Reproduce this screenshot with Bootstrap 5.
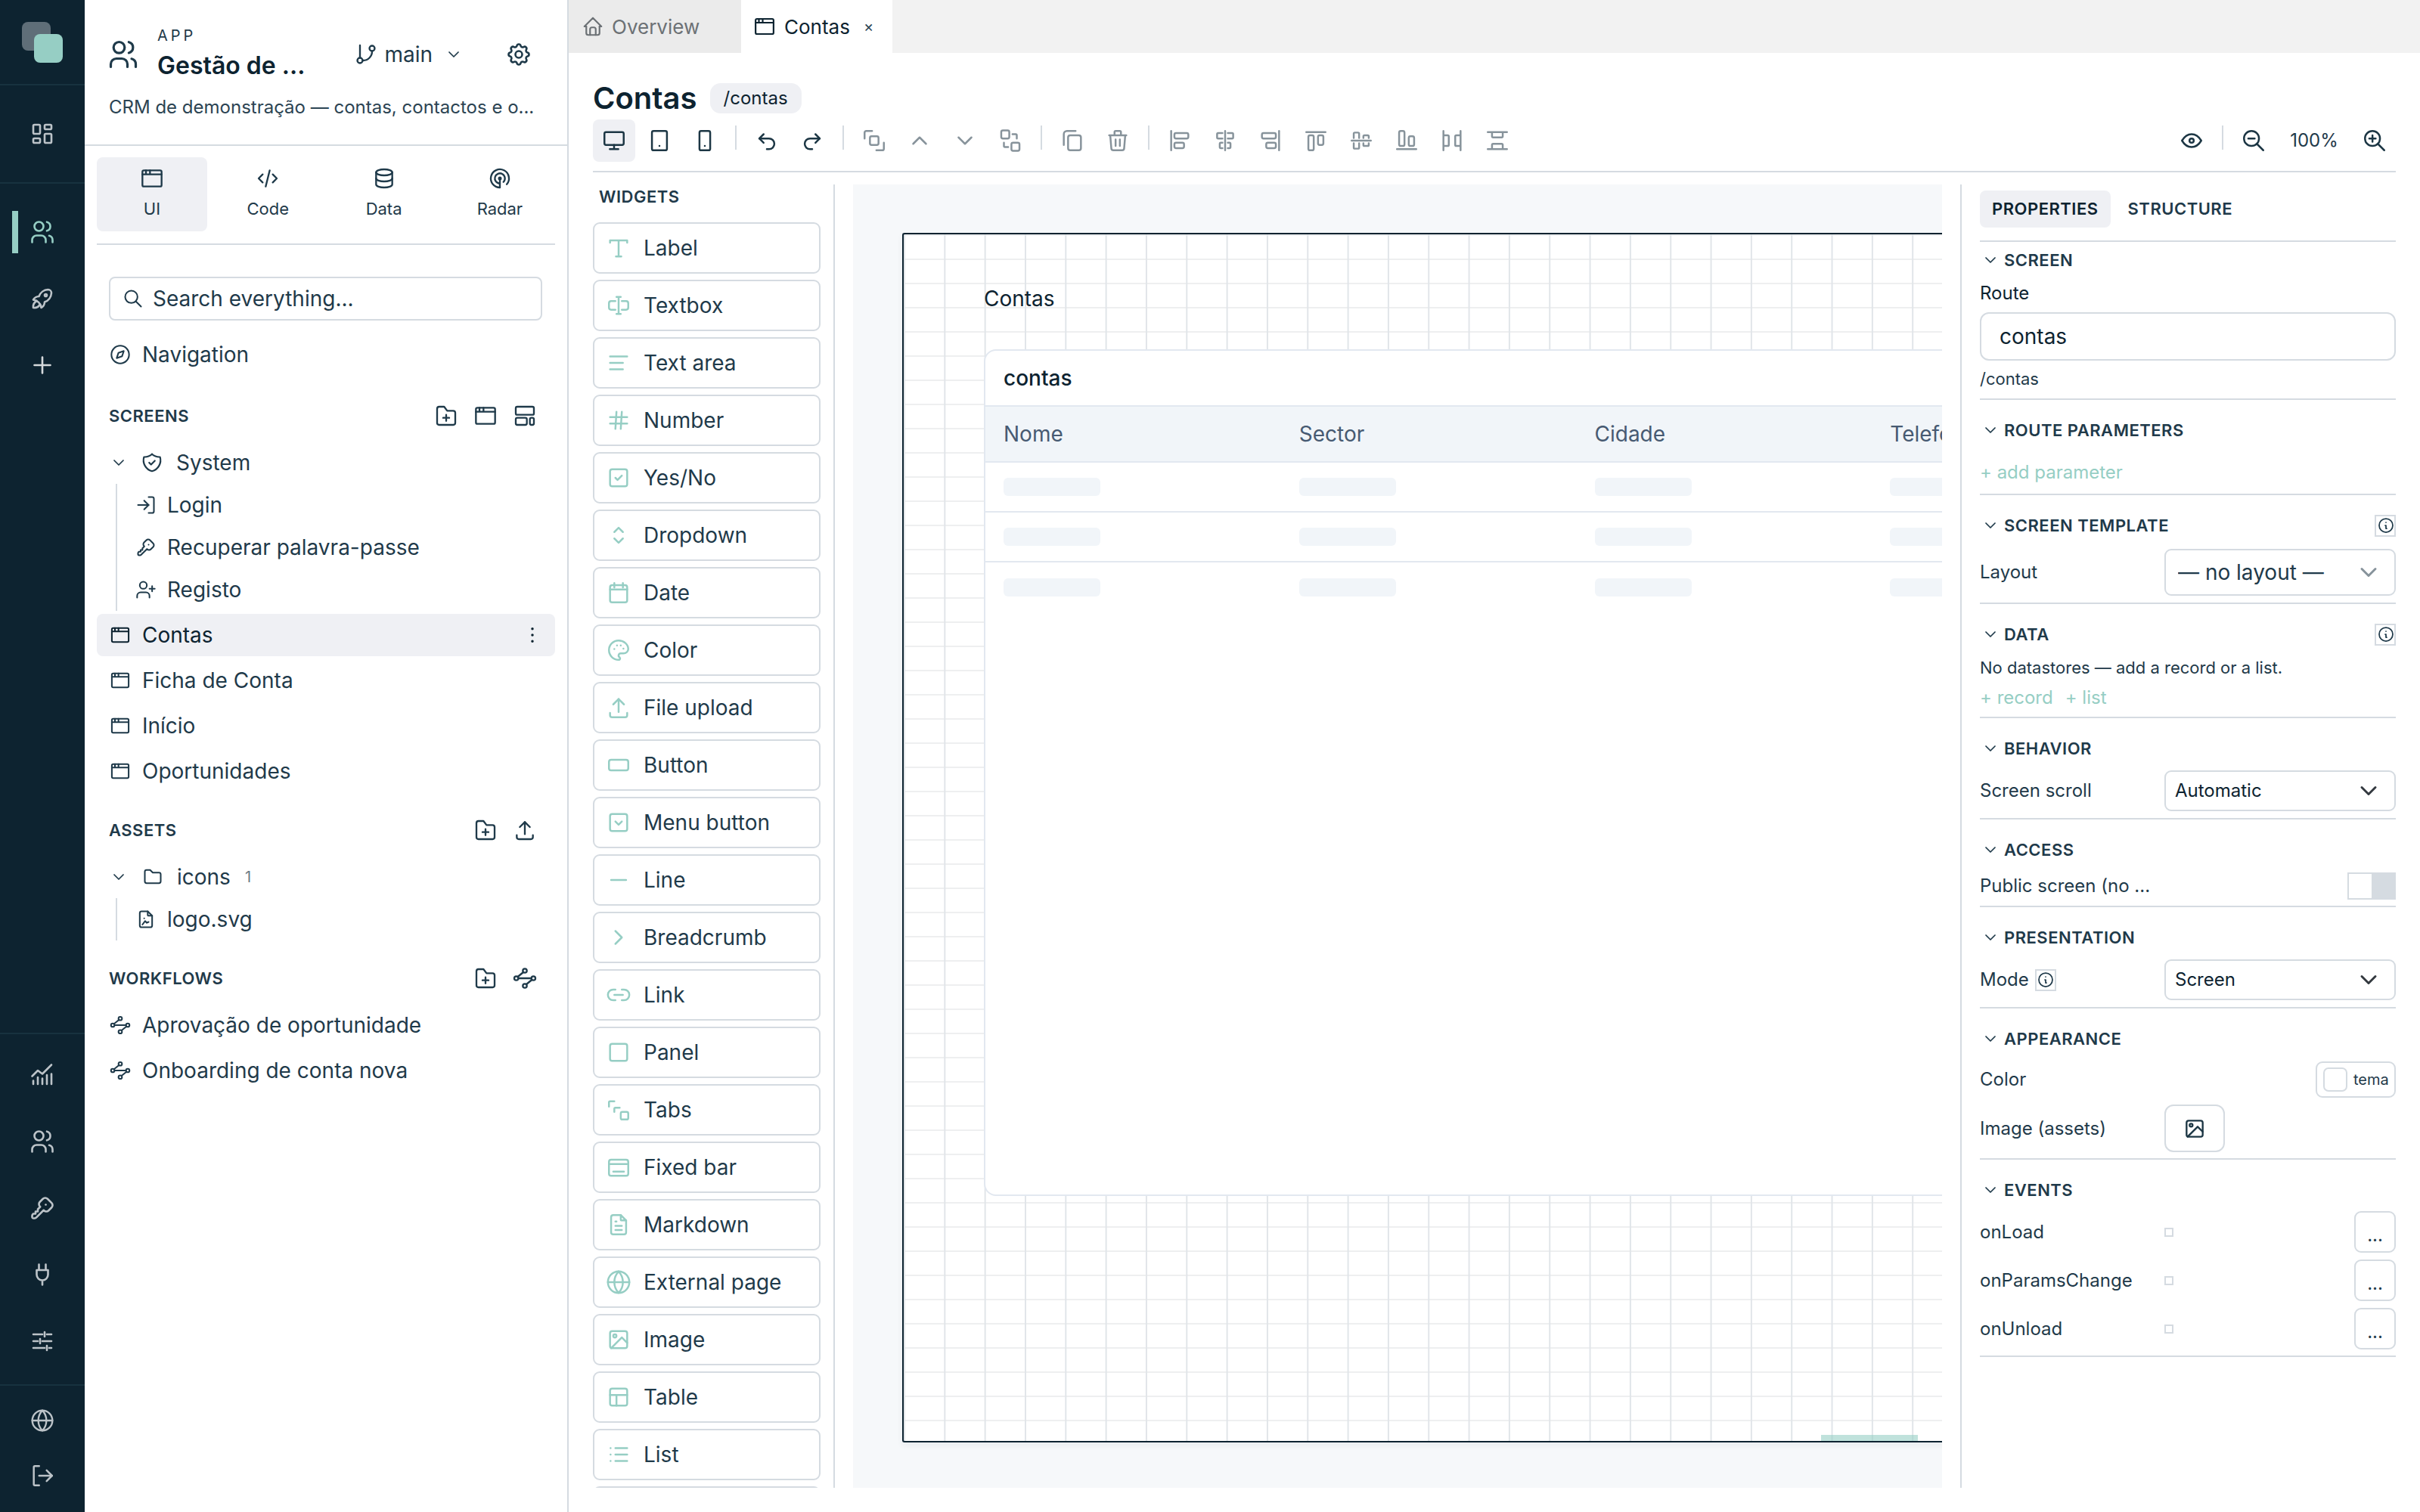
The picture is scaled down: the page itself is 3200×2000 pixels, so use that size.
<!DOCTYPE html>
<html lang="pt">
<head>
  <meta charset="UTF-8">
  <meta name="viewport" content="width=device-width, initial-scale=1">
  <title>Contas</title>
  <link href="https://cdn.jsdelivr.net/npm/bootstrap@5.3.2/dist/css/bootstrap.min.css" rel="stylesheet">
  <style>
    :root { --ink: #0d2330; --txt: #1f3a4a; --line: #d5dbe1; --teal: #96cec4; --pill: #eff0f4; --dim: #87939b; }
    html, body { height: 2000px; }
    body { font-family: Inter, "Liberation Sans", sans-serif; font-size: 28px; color: var(--txt); background: #fff; overflow: hidden; }

    .ic { fill: none; stroke: currentColor; stroke-width: 1.75; stroke-linecap: round; stroke-linejoin: round; flex: none; }
    .s24 { width: 24px; height: 24px; }
    .s28 { width: 28px; height: 28px; }
    .s30 { width: 30px; height: 30px; }
    .s32 { width: 32px; height: 32px; }
    .s34 { width: 34px; height: 34px; }
    .s36 { width: 36px; height: 36px; }
    .s44 { width: 44px; height: 44px; }

    /* rail */
    .rail { width: 112px; background: #0d2330; color: #bcc3c8; flex: none; }
    .rail-logo { height: 113px; position: relative; border-bottom: 2px solid #17323f; }
    .logo-back, .logo-front { position: absolute; width: 38px; height: 38px; border-radius: 8px; }
    .logo-back { left: 29px; top: 29px; background: #5f6e78; }
    .logo-front { left: 45px; top: 45px; background: var(--teal); }
    .rail-group { border-bottom: 2px solid #17323f; }
    .rail-item { height: 88px; display: flex; align-items: center; justify-content: center; position: relative; }
    .rail-item.on { color: var(--teal); }
    .rail-item.on::before { content: ""; position: absolute; left: 16px; top: 16px; width: 8px; height: 56px; background: var(--teal); }
    .rail-plus { color: #d5d9dc; }
    .rail-lower { border-top: 2px solid #17323f; padding: 10px 0 13px; }
    .rail-foot { border-top: 2px solid #17323f; height: 169px; padding-top: 2px; }

    /* sidebar */
    .side { width: 640px; flex: none; border-right: 2px solid var(--line); }
    .side-head { height: 193px; padding: 34px 0 0 32px; border-bottom: 2px solid var(--line); }
    .app-row { height: 76px; }
    .app-icon { margin: 0 23px 0 -3px; }
    .app-kicker { font-size: 20px; line-height: 24px; letter-spacing: 4px; color: var(--txt); margin-top: -2px; }
    .app-name { font-size: 32px; line-height: 42px; font-weight: 600; color: var(--ink); margin-top: 7px; }
    .branch { font-size: 28px; color: var(--txt); }
    .app-gear { margin: 0 46px 0 56px; }
    .app-desc { font-size: 24px; line-height: 32px; margin-top: 16px; color: #2c4453; white-space: nowrap; }
    .side-tabs { margin: 15px 16px 0; padding-bottom: 16px; border-bottom: 2px solid var(--line); display: grid; grid-template-columns: repeat(4, 146px); column-gap: 7.3px; }
    .side-tab { height: 98px; border-radius: 8px; font-size: 22px; color: var(--txt); display: flex; flex-direction: column; align-items: center; padding-top: 12px; gap: 10px; line-height: 28px; }
    .side-tab.on { background: var(--pill); }
    .side-search { margin: 42px 33px 0 32px; height: 58px; border: 2px solid var(--line); border-radius: 8px; padding: 0 16px; gap: 12px; font-size: 28px; }
    .tree { margin: 0 16px; }
    .tree-row { height: 56px; display: flex; align-items: center; gap: 15px; padding-left: 17px; border-radius: 8px; color: var(--txt); margin-top: 4px; }
    .tree-row.on { background: var(--pill); color: var(--ink); }
    .tree-folder { padding-left: 20px; gap: 24px; margin-top: 0; }
    .tree-kids { margin-left: 25px; border-left: 2px solid var(--line); padding-left: 24px; }
    .tree-kids .tree-row { margin-top: 0; padding-left: 0; gap: 14px; }
    .tree-head { height: 32px; margin-left: 16px; padding-right: 24px; display: flex; align-items: center; justify-content: space-between; font-size: 22px; font-weight: 600; letter-spacing: .5px; }
    .head-icons { display: flex; gap: 20px; }
    .count { font-size: 20px; color: #6c7a84; margin-left: -5px; }

    /* main */
    .main { min-width: 0; }
    .file-tabs { height: 70px; background: #f2f2f2; }
    .file-tab { height: 70px; display: flex; align-items: center; font-size: 26px; }
    .file-tab.off { width: 228px; background: #ebebeb; color: #6c7175; padding-left: 17px; gap: 10px; }
    .file-tab.cur { width: 200px; background: #fff; color: var(--ink); padding-left: 16px; gap: 11px; }
    .tab-x { font-size: 20px; margin-left: 7px; color: #2c4453; }
    .work { padding: 0 32px; }
    .page-title { margin-top: 40px; height: 40px; gap: 17px; }
    .page-name { font-size: 40px; font-weight: 600; color: var(--ink); line-height: 40px; }
    .route-chip { height: 40px; padding: 0 18px; border-radius: 14px; background: var(--pill); font-size: 24px; color: var(--ink); display: flex; align-items: center; }
    .tools { margin-top: 8px; padding-bottom: 12px; border-bottom: 2px solid var(--line); gap: 4px; box-sizing: content-box; height: 56px; }
    .tool { width: 56px; height: 56px; padding: 0; border: 0; border-radius: 8px; color: #1c3644; display: flex; align-items: center; justify-content: center; }
    .tool.on { background: var(--pill); }
    .tool.dim { color: var(--dim); }
    .tool-sep { width: 2px; height: 32px; background: var(--line); margin: 0 8px; }
    .zoom-val { width: 96px; text-align: center; font-size: 24px; color: var(--txt); }
    .work-body { margin-top: 16px; height: 1724px; }

    /* widgets */
    .widgets { width: 320px; flex: none; border-right: 2px solid var(--line); padding-right: 17px; overflow: hidden; }
    .widgets-title { font-size: 22px; font-weight: 600; line-height: 32px; letter-spacing: .5px; margin-bottom: 18px; padding-left: 8px; }
    .widget { height: 68px; margin-bottom: 8px; border: 2px solid var(--line); border-radius: 9px; display: flex; align-items: center; padding-left: 15px; gap: 16px; background: #fff; }
    .widget .ic { color: var(--teal); }

    /* canvas */
    .stage { width: 1440px; margin-left: 24px; flex: none; background: #f6f8fa; overflow: hidden; padding: 64px 0 0 65px; }
    .frame { position: relative; width: 2400px; height: 1600px; background-color: #fff; border: 2px solid var(--ink); border-right: 0; border-radius: 3px 0 0 3px; box-shadow: 0 4px 8px rgba(13,35,48,.06);
      background-image: linear-gradient(to right, #e1e5e9 2px, transparent 2px), linear-gradient(to bottom, #eeeff0 2px, transparent 2px);
      background-size: 53.33px 32px; background-position: 0 0; }
    .frame-label { position: absolute; left: 106px; top: 67px; line-height: 36px; color: var(--ink); }
    .frame-card { position: absolute; left: 106px; top: 152px; width: 1700px; height: 1120px; border: 2px solid #e2e8f0; border-radius: 16px; overflow: hidden; background: #fff; }
    .frame-card-title { height: 72px; display: flex; align-items: center; padding-left: 24px; font-weight: 500; color: var(--ink); }
    .frame-table { width: 1563px; table-layout: fixed; margin: 0; }
    .frame-table th, .frame-table td { padding: 0 0 0 24px; vertical-align: middle; border-bottom: 2px solid #e2e8f0; }
    .frame-table th { height: 74px; background: #f1f5f9; font-weight: 400; color: #475a72; border-top: 2px solid #e2e8f0; }
    .frame-table td { height: 66px; }
    .frame-table tr:last-child td { border-bottom: 0; }
    .skel { display: block; width: 128px; height: 24px; border-radius: 6px; background: #f1f5f9; }
    .frame-mark { position: absolute; left: 1213px; bottom: 0; width: 128px; height: 8px; background: rgba(150,206,196,.6); }

    /* properties */
    .props { margin-left: 24px; padding-left: 24px; border-left: 2px solid var(--line); font-size: 24px; min-width: 0; }
    .props-tabs { padding: 8px 0 17px; border-bottom: 2px solid var(--line); gap: 7px; }
    .props-tab { height: 49px; padding: 0 16px; border-radius: 8px; font-size: 22px; font-weight: 600; letter-spacing: .5px; display: flex; align-items: center; color: var(--txt); }
    .props-tab.on { background: var(--pill); color: var(--ink); }
    .sec { padding: 24px 0 9px; border-bottom: 2px solid var(--line); }
    .sec-first { padding-top: 8px; }
    .sec-head { height: 32px; margin-bottom: 13px; display: flex; align-items: center; font-size: 22px; font-weight: 600; letter-spacing: .5px; gap: 6px; }
    .sec-head .ic { margin-left: 2px; }
    .hint-box { width: 28px; height: 29px; border: 2px solid var(--line); display: inline-flex; align-items: center; justify-content: center; }
    .prop-row { display: flex; align-items: center; }
    .prop-label { width: 244px; flex: none; }
    .route-label { color: var(--ink); line-height: 30px; margin-bottom: 10px; }
    .route-input { height: 64px; border: 2px solid var(--line); border-radius: 12px; font-size: 28px; padding: 0 24px; color: var(--ink); }
    .route-sub { font-size: 22px; line-height: 30px; margin: 9px 0 2px; }
    .add-link { color: var(--teal); line-height: 32px; }
    .note { font-size: 22px; line-height: 28px; margin-bottom: 10px; }
    .prop-select { height: 54px; flex: 1; border: 2px solid var(--line); border-radius: 9px; font-size: 24px; padding: 0 40px 0 12px; color: var(--ink); background-position: right 22px center; background-size: 24px; }
    .prop-select.tall { height: 62px; font-size: 28px; padding-left: 16px; color: var(--txt); background-image: url("data:image/svg+xml,%3csvg xmlns='http://www.w3.org/2000/svg' viewBox='0 0 16 16'%3e%3cpath fill='none' stroke='%2387939b' stroke-linecap='round' stroke-linejoin='round' stroke-width='2' d='m2 5 6 6 6-6'/%3e%3c/svg%3e"); }
    .pub-toggle { width: 64px; height: 36px; border: 2px solid var(--line); display: flex; justify-content: flex-end; }
    .pub-toggle span { width: 30px; background: var(--line); }
    .tema-btn { width: 106px; height: 48px; border: 2px solid var(--line); border-radius: 9px; display: flex; align-items: center; padding-left: 8px; gap: 8px; font-size: 20px; }
    .tema-swatch { width: 32px; height: 32px; border: 2px solid var(--line); border-radius: 7px; }
    .asset-btn { width: 80px; height: 63px; border: 2px solid var(--line); border-radius: 12px; padding: 0; display: flex; align-items: center; justify-content: center; color: #1c3644; }
    .ev-row { margin-bottom: 9px; }
    .ev-row:last-child { margin-bottom: 0; }
    .ev-check { width: 12px; height: 12px; border: 2px solid var(--line); }
    .ev-btn { width: 55px; height: 55px; margin-left: auto; padding: 8px 0 0; border: 2px solid var(--line); border-radius: 9px; font-size: 24px; color: var(--txt); line-height: 1; }
  </style>
</head>
<body>

<svg width="0" height="0" class="position-absolute">
  <symbol id="users" viewBox="0 0 24 24"><circle cx="9" cy="7" r="4"/><path d="M3 21v-2a4 4 0 0 1 4-4h4a4 4 0 0 1 4 4v2"/><path d="M16 3.13a4 4 0 0 1 0 7.75"/><path d="M21 21v-2a4 4 0 0 0-3-3.85"/></symbol>
  <symbol id="dash" viewBox="0 0 24 24"><rect x="4" y="4" width="6" height="8" rx="1"/><rect x="4" y="16" width="6" height="4" rx="1"/><rect x="14" y="12" width="6" height="8" rx="1"/><rect x="14" y="4" width="6" height="4" rx="1"/></symbol>
  <symbol id="rocket" viewBox="0 0 24 24"><path d="M4 13a8 8 0 0 1 7 7a6 6 0 0 0 3-5a9 9 0 0 0 6-8a3 3 0 0 0-3-3a9 9 0 0 0-8 6a6 6 0 0 0-5 3"/><path d="M7 14a6 6 0 0 0-3 6a6 6 0 0 0 6-3"/><circle cx="15" cy="9" r="1"/></symbol>
  <symbol id="plus" viewBox="0 0 24 24"><path d="M12 5v14M5 12h14"/></symbol>
  <symbol id="chart" viewBox="0 0 24 24"><path d="M4 20v-3M8 20v-6M12 20v-5M16 20v-8M20 20v-9"/><path d="M3 13l5-5 4 3 8-8"/></symbol>
  <symbol id="key" viewBox="0 0 24 24"><path d="M16.555 3.843l3.602 3.602a2.877 2.877 0 0 1 0 4.069l-2.643 2.643a2.877 2.877 0 0 1-4.069 0l-.301-.301l-6.558 6.558a2 2 0 0 1-1.239 .578l-.175 .008h-1.172a1 1 0 0 1-.993-.883l-.007-.117v-1.172a2 2 0 0 1 .467-1.284l.119-.13l.414-.414h2v-2h2v-2l2.144-2.144l-.301-.301a2.877 2.877 0 0 1 0-4.069l2.643-2.643a2.877 2.877 0 0 1 4.069 0z"/><path d="M15 9h.01"/></symbol>
  <symbol id="plug" viewBox="0 0 24 24"><path d="M9 3v5M15 3v5M7 8h10v4a5 5 0 0 1-10 0zM12 17v4"/></symbol>
  <symbol id="sliders" viewBox="0 0 24 24"><path d="M4 6h8M16 6h4M14 4v4M4 12h4M12 12h8M10 10v4M4 18h10M18 18h2M16 16v4"/></symbol>
  <symbol id="globe" viewBox="0 0 24 24"><circle cx="12" cy="12" r="10"/><path d="M12 2a14.5 14.5 0 0 0 0 20a14.5 14.5 0 0 0 0-20"/><path d="M2 12h20"/></symbol>
  <symbol id="logout" viewBox="0 0 24 24"><path d="M9 21H5a1 1 0 0 1-1-1V4a1 1 0 0 1 1-1h4"/><path d="M16 17l5-5-5-5"/><path d="M21 12H9"/></symbol>
  <symbol id="branch" viewBox="0 0 24 24"><path d="M6 3v12"/><circle cx="18" cy="6" r="2.6"/><circle cx="6" cy="18" r="2.6"/><path d="M18 9a9 9 0 0 1-9 9"/></symbol>
  <symbol id="down" viewBox="0 0 24 24"><path d="M6 9l6 6l6-6"/></symbol>
  <symbol id="up" viewBox="0 0 24 24"><path d="M6 15l6-6l6 6"/></symbol>
  <symbol id="gear" viewBox="0 0 24 24"><path d="M10.325 4.317c.426-1.756 2.924-1.756 3.35 0a1.724 1.724 0 0 0 2.573 1.066c1.543-.94 3.31 .826 2.37 2.37a1.724 1.724 0 0 0 1.065 2.572c1.756 .426 1.756 2.924 0 3.35a1.724 1.724 0 0 0-1.066 2.573c.94 1.543-.826 3.31-2.37 2.37a1.724 1.724 0 0 0-2.572 1.065c-.426 1.756-2.924 1.756-3.35 0a1.724 1.724 0 0 0-2.573-1.066c-1.543 .94-3.31-.826-2.37-2.37a1.724 1.724 0 0 0-1.065-2.572c-1.756-.426-1.756-2.924 0-3.35a1.724 1.724 0 0 0 1.066-2.573c-.94-1.543 .826-3.31 2.37-2.37c1 .608 2.296 .07 2.572-1.065z"/><circle cx="12" cy="12" r="3"/></symbol>
  <symbol id="win" viewBox="0 0 24 24"><rect x="2.5" y="4" width="19" height="16" rx="1.5"/><path d="M2.5 8h19M6 4v4M10 4v4"/></symbol>
  <symbol id="code" viewBox="0 0 24 24"><path d="M7 8l-4 4l4 4M17 8l4 4l-4 4M14 4l-4 16"/></symbol>
  <symbol id="db" viewBox="0 0 24 24"><ellipse cx="12" cy="6" rx="8" ry="3"/><path d="M4 6v6a8 3 0 0 0 16 0v-6"/><path d="M4 12v6a8 3 0 0 0 16 0v-6"/></symbol>
  <symbol id="radar" viewBox="0 0 24 24"><circle cx="12" cy="12" r="1"/><path d="M15.51 15.56a5 5 0 1 0-3.51 1.44"/><path d="M18.832 17.86a9 9 0 1 0-6.832 3.14"/><path d="M12 12v9"/></symbol>
  <symbol id="search" viewBox="0 0 24 24"><circle cx="10" cy="10" r="7"/><path d="M21 21l-6-6"/></symbol>
  <symbol id="compass" viewBox="0 0 24 24"><circle cx="12" cy="12" r="10"/><path d="M8 16l2-6 6-2-2 6z"/></symbol>
  <symbol id="folderplus" viewBox="0 0 24 24"><path d="M5 3h5l3 4h6a2 2 0 0 1 2 2v10a2 2 0 0 1-2 2H5a2 2 0 0 1-2-2V5a2 2 0 0 1 2-2"/><path d="M12 11v6M9 14h6"/></symbol>
  <symbol id="folder" viewBox="0 0 24 24"><path d="M5 4h4l3 3h7a2 2 0 0 1 2 2v8a2 2 0 0 1-2 2H5a2 2 0 0 1-2-2V6a2 2 0 0 1 2-2"/></symbol>
  <symbol id="layout" viewBox="0 0 24 24"><rect x="3" y="3" width="18" height="8" rx="1.5"/><rect x="3" y="14" width="11" height="7" rx="1.5"/><rect x="17" y="14" width="4" height="7" rx="1.5"/></symbol>
  <symbol id="shield" viewBox="0 0 24 24"><path d="M12 3a12 12 0 0 0 8.5 3a12 12 0 0 1-8.5 15a12 12 0 0 1-8.5-15a12 12 0 0 0 8.5-3"/><path d="M9 12l2 2l4-4"/></symbol>
  <symbol id="login" viewBox="0 0 24 24"><path d="M15 3h4a2 2 0 0 1 2 2v14a2 2 0 0 1-2 2h-4"/><path d="M10 17l5-5-5-5"/><path d="M15 12H3"/></symbol>
  <symbol id="userplus" viewBox="0 0 24 24"><path d="M16 21v-2a4 4 0 0 0-4-4H6a4 4 0 0 0-4 4v2"/><circle cx="9" cy="7" r="4"/><path d="M19 8v6M22 11h-6"/></symbol>
  <symbol id="dots" viewBox="0 0 24 24"><path d="M12 5v.01M12 12v.01M12 19v.01" stroke-width="3"/></symbol>
  <symbol id="upload" viewBox="0 0 24 24"><path d="M4 17v2a2 2 0 0 0 2 2h12a2 2 0 0 0 2-2v-2"/><path d="M7 9l5-5l5 5"/><path d="M12 4v12"/></symbol>
  <symbol id="fileimg" viewBox="0 0 24 24"><path d="M14 3v4a1 1 0 0 0 1 1h4"/><path d="M17 21H7a2 2 0 0 1-2-2V5a2 2 0 0 1 2-2h7l5 5v11a2 2 0 0 1-2 2z"/><path d="M8 18l3-4l2 2l2-1M10 11h.01"/></symbol>
  <symbol id="flow" viewBox="0 0 24 24"><circle cx="12" cy="4.5" r="2"/><circle cx="12" cy="19.5" r="2"/><circle cx="3.5" cy="12" r="2"/><circle cx="20.5" cy="12" r="2"/><path d="M5.5 12h13M10.5 6L5 10.5M19 13.5L13.5 18"/></symbol>
  <symbol id="home" viewBox="0 0 24 24"><path d="M5 12H3l9-9l9 9h-2"/><path d="M5 12v7a2 2 0 0 0 2 2h10a2 2 0 0 0 2-2v-7"/><path d="M9 21v-6a2 2 0 0 1 2-2h2a2 2 0 0 1 2 2v6"/></symbol>
  <symbol id="monitor" viewBox="0 0 24 24"><rect x="3" y="4" width="18" height="12" rx="1.5"/><path d="M12 16v4M8 20h8"/></symbol>
  <symbol id="tablet" viewBox="0 0 24 24"><rect x="5" y="3" width="14" height="18" rx="1.5"/><path d="M12 17v.01"/></symbol>
  <symbol id="phone" viewBox="0 0 24 24"><rect x="7" y="3" width="10" height="18" rx="1.5"/><path d="M12 17v.01"/></symbol>
  <symbol id="undo" viewBox="0 0 24 24"><path d="M9 14l-4-4l4-4"/><path d="M5 10h9a5 5 0 0 1 0 10h-2"/></symbol>
  <symbol id="redo" viewBox="0 0 24 24"><path d="M15 14l4-4l-4-4"/><path d="M19 10h-9a5 5 0 0 0 0 10h2"/></symbol>
  <symbol id="front" viewBox="0 0 24 24"><path d="M3 10V4.5A1.5 1.5 0 0 1 4.5 3H10M21 14v5.5a1.5 1.5 0 0 1-1.5 1.5H14"/><rect x="8" y="8" width="8" height="8" rx="1.5"/></symbol>
  <symbol id="back" viewBox="0 0 24 24"><rect x="3.5" y="2.5" width="7.5" height="7.5" rx="1.5"/><rect x="13" y="14" width="7.5" height="7.5" rx="1.5"/><path d="M14 6h3a1 1 0 0 1 1 1v3M10 18H7a1 1 0 0 1-1-1v-3"/></symbol>
  <symbol id="copy" viewBox="0 0 24 24"><rect x="8" y="7" width="12" height="14" rx="2"/><path d="M4 16V6a3 3 0 0 1 3-3h8"/></symbol>
  <symbol id="trash" viewBox="0 0 24 24"><path d="M4 7h16M10 11v6M14 11v6M5 7l1 12a2 2 0 0 0 2 2h8a2 2 0 0 0 2-2l1-12M9 7V4a1 1 0 0 1 1-1h4a1 1 0 0 1 1 1v3"/></symbol>
  <symbol id="al-left" viewBox="0 0 24 24"><path d="M4 3v18"/><rect x="7" y="5" width="13" height="5" rx="1.5"/><rect x="7" y="14" width="9" height="5" rx="1.5"/></symbol>
  <symbol id="al-cx" viewBox="0 0 24 24"><path d="M12 3v18M9.5 5H5.5a1 1 0 0 0-1 1v3a1 1 0 0 0 1 1h4M14.5 5h4a1 1 0 0 1 1 1v3a1 1 0 0 1-1 1h-4M9.5 14H8a1 1 0 0 0-1 1v3a1 1 0 0 0 1 1h1.5M14.5 14H16a1 1 0 0 1 1 1v3a1 1 0 0 1-1 1h-1.5"/></symbol>
  <symbol id="al-right" viewBox="0 0 24 24"><path d="M20 3v18"/><rect x="4" y="5" width="13" height="5" rx="1.5"/><rect x="8" y="14" width="9" height="5" rx="1.5"/></symbol>
  <symbol id="al-top" viewBox="0 0 24 24"><path d="M3 4h18"/><rect x="5" y="7" width="5" height="14" rx="1.5"/><rect x="14" y="7" width="5" height="9" rx="1.5"/></symbol>
  <symbol id="al-cy" viewBox="0 0 24 24"><path d="M3 12h18M5 9.5V5.5a1 1 0 0 1 1-1h3a1 1 0 0 1 1 1v4M14 9.5V8a1 1 0 0 1 1-1h3a1 1 0 0 1 1 1v1.5M5 14.5v4a1 1 0 0 0 1 1h3a1 1 0 0 0 1-1v-4M14 14.5V16a1 1 0 0 0 1 1h3a1 1 0 0 0 1-1v-1.5"/></symbol>
  <symbol id="al-bottom" viewBox="0 0 24 24"><path d="M3 20h18"/><rect x="5" y="3" width="5" height="14" rx="1.5"/><rect x="14" y="8" width="5" height="9" rx="1.5"/></symbol>
  <symbol id="dist-h" viewBox="0 0 24 24"><path d="M4 3v18M20 3v18M4 7h4a1 1 0 0 1 1 1v8a1 1 0 0 1-1 1H4M20 7h-4a1 1 0 0 0-1 1v8a1 1 0 0 0 1 1h4"/></symbol>
  <symbol id="dist-v" viewBox="0 0 24 24"><path d="M3 4h18M3 20h18M7 4v4a1 1 0 0 0 1 1h8a1 1 0 0 0 1-1V4M7 20v-4a1 1 0 0 1 1-1h8a1 1 0 0 1 1 1v4"/></symbol>
  <symbol id="eye" viewBox="0 0 24 24"><path d="M10 12a2 2 0 1 0 4 0a2 2 0 0 0-4 0"/><path d="M21 12c-2.4 4-5.4 6-9 6c-3.6 0-6.6-2-9-6c2.4-4 5.4-6 9-6c3.6 0 6.6 2 9 6"/></symbol>
  <symbol id="zoomout" viewBox="0 0 24 24"><circle cx="10" cy="10" r="7"/><path d="M7 10h6M21 21l-6-6"/></symbol>
  <symbol id="zoomin" viewBox="0 0 24 24"><circle cx="10" cy="10" r="7"/><path d="M7 10h6M10 7v6M21 21l-6-6"/></symbol>
  <symbol id="info" viewBox="0 0 24 24"><circle cx="12" cy="12" r="9"/><path d="M12 8h.01M11 12h1v4h1"/></symbol>
  <symbol id="imagebox" viewBox="0 0 24 24"><rect x="4" y="4" width="16" height="16" rx="2"/><circle cx="8.5" cy="8.5" r="1.5"/><path d="M20 15l-5-5L5 20"/></symbol>

  <symbol id="w-label" viewBox="0 0 24 24"><path d="M4 7V5h16v2M12 5v15M9.5 20h5"/></symbol>
  <symbol id="w-textbox" viewBox="0 0 24 24"><path d="M12 4v16M10 4h4M10 20h4M9 8H5a2 2 0 0 0-2 2v4a2 2 0 0 0 2 2h4M15 8h4a2 2 0 0 1 2 2v4a2 2 0 0 1-2 2h-4"/></symbol>
  <symbol id="w-area" viewBox="0 0 24 24"><path d="M4 6h16M4 12h12M4 18h12"/></symbol>
  <symbol id="w-hash" viewBox="0 0 24 24"><path d="M4 9h16M4 15h16M10 4L9 20M15 4l-1 16"/></symbol>
  <symbol id="w-yes" viewBox="0 0 24 24"><rect x="4" y="4" width="16" height="16" rx="2"/><path d="M9 12l2 2l4-4"/></symbol>
  <symbol id="w-select" viewBox="0 0 24 24"><path d="M8 9l4-4l4 4M16 15l-4 4l-4-4"/></symbol>
  <symbol id="w-date" viewBox="0 0 24 24"><rect x="4" y="5" width="16" height="16" rx="2"/><path d="M16 3v4M8 3v4M4 9h16"/></symbol>
  <symbol id="w-color" viewBox="0 0 24 24"><path d="M12 21a9 9 0 0 1 0-18c4.97 0 9 3.582 9 8c0 1.06-.474 2.078-1.318 2.828c-.844 .75-1.989 1.172-3.182 1.172h-2.5a2 2 0 0 0-1 3.75a1.3 1.3 0 0 1-1 2.25"/><path d="M8 11v.01M10.5 7.5v.01M14 7.5v.01M16.5 10.5v.01"/></symbol>
  <symbol id="w-button" viewBox="0 0 24 24"><rect x="3" y="7" width="18" height="10" rx="2"/></symbol>
  <symbol id="w-menu" viewBox="0 0 24 24"><rect x="4" y="4" width="16" height="16" rx="2"/><path d="M9 11l3 3l3-3"/></symbol>
  <symbol id="w-line" viewBox="0 0 24 24"><path d="M5 12h14"/></symbol>
  <symbol id="w-crumb" viewBox="0 0 24 24"><path d="M9 6l6 6l-6 6"/></symbol>
  <symbol id="w-link" viewBox="0 0 24 24"><path d="M9 17H7A5 5 0 0 1 7 7h2M15 7h2a5 5 0 1 1 0 10h-2M8 12h8"/></symbol>
  <symbol id="w-panel" viewBox="0 0 24 24"><rect x="4" y="4" width="16" height="16" rx="2"/></symbol>
  <symbol id="w-tabs" viewBox="0 0 24 24"><path d="M3 9V5a1 1 0 0 1 1-1h4M8 14v-3a1 1 0 0 1 1-1h4"/><rect x="14" y="14" width="7" height="7" rx="1.5"/></symbol>
  <symbol id="w-bar" viewBox="0 0 24 24"><rect x="3" y="5" width="18" height="15" rx="2"/><path d="M3 9h18M7 16h10"/></symbol>
  <symbol id="w-doc" viewBox="0 0 24 24"><path d="M14 3v4a1 1 0 0 0 1 1h4"/><path d="M17 21H7a2 2 0 0 1-2-2V5a2 2 0 0 1 2-2h7l5 5v11a2 2 0 0 1-2 2z"/><path d="M9 9h1M9 13h6M9 17h6"/></symbol>
  <symbol id="w-table" viewBox="0 0 24 24"><rect x="4" y="4" width="16" height="16" rx="2"/><path d="M4 10h16M10 10v10"/></symbol>
  <symbol id="w-list" viewBox="0 0 24 24"><path d="M9 6h11M9 12h11M9 18h11M4.5 6v.01M4.5 12v.01M4.5 18v.01"/></symbol>
</svg>

<div class="d-flex" style="height:2000px">

  <!-- icon rail -->
  <aside class="rail d-flex flex-column">
    <div class="rail-logo"><span class="logo-back"></span><span class="logo-front"></span></div>
    <div class="rail-group d-flex align-items-center justify-content-center" style="height:130px"><svg class="ic s36"><use href="#dash"/></svg></div>
    <div class="pt-3 mt-1">
      <div class="rail-item on"><svg class="ic s36"><use href="#users"/></svg></div>
      <div class="rail-item"><svg class="ic s36"><use href="#rocket"/></svg></div>
      <div class="rail-item rail-plus"><svg class="ic s36"><use href="#plus"/></svg></div>
    </div>
    <div class="rail-lower mt-auto">
      <div class="rail-item"><svg class="ic s36"><use href="#chart"/></svg></div>
      <div class="rail-item"><svg class="ic s36"><use href="#users"/></svg></div>
      <div class="rail-item"><svg class="ic s36"><use href="#key"/></svg></div>
      <div class="rail-item"><svg class="ic s36"><use href="#plug"/></svg></div>
      <div class="rail-item"><svg class="ic s36"><use href="#sliders"/></svg></div>
    </div>
    <div class="rail-foot">
      <div class="rail-item"><svg class="ic s32"><use href="#globe"/></svg></div>
      <div class="rail-item" style="height:58px"><svg class="ic s34"><use href="#logout"/></svg></div>
    </div>
  </aside>

  <!-- sidebar -->
  <aside class="side d-flex flex-column">
    <div class="side-head">
      <div class="app-row d-flex align-items-center">
        <svg class="ic s44 app-icon"><use href="#users"/></svg>
        <div class="flex-grow-1">
          <div class="app-kicker">APP</div>
          <div class="app-name">Gestão de ...</div>
        </div>
        <div class="branch d-flex align-items-center">
          <svg class="ic s32 me-2"><use href="#branch"/></svg><span>main</span><svg class="ic s24 ms-3"><use href="#down"/></svg>
        </div>
        <svg class="ic s36 app-gear"><use href="#gear"/></svg>
      </div>
      <div class="app-desc">CRM de demonstração — contas, contactos e o...</div>
    </div>

    <div class="side-tabs">
      <div class="side-tab on"><svg class="ic s32"><use href="#win"/></svg>UI</div>
      <div class="side-tab"><svg class="ic s32"><use href="#code"/></svg>Code</div>
      <div class="side-tab"><svg class="ic s32"><use href="#db"/></svg>Data</div>
      <div class="side-tab"><svg class="ic s32"><use href="#radar"/></svg>Radar</div>
    </div>

    <div class="side-search d-flex align-items-center">
      <svg class="ic s28"><use href="#search"/></svg><span>Search everything...</span>
    </div>

    <div class="tree">
      <div class="tree-row" style="margin-top:17px"><svg class="ic s28"><use href="#compass"/></svg>Navigation</div>

      <div class="tree-head" style="margin-top:37px"><span>SCREENS</span><span class="head-icons"><svg class="ic s32"><use href="#folderplus"/></svg><svg class="ic s32"><use href="#win"/></svg><svg class="ic s32"><use href="#layout"/></svg></span></div>

      <div class="tree-row tree-folder" style="margin-top:18px"><svg class="ic s24" style="margin-left:-3px"><use href="#down"/></svg><svg class="ic s30" style="margin-left:-7px;margin-right:-7px"><use href="#shield"/></svg><span>System</span></div>
      <div class="tree-kids">
        <div class="tree-row"><svg class="ic s28"><use href="#login"/></svg>Login</div>
        <div class="tree-row"><svg class="ic s28"><use href="#key"/></svg>Recuperar palavra-passe</div>
        <div class="tree-row"><svg class="ic s28"><use href="#userplus"/></svg>Registo</div>
      </div>
      <div class="tree-row on"><svg class="ic s28"><use href="#win"/></svg>Contas<svg class="ic s28 ms-auto me-3"><use href="#dots"/></svg></div>
      <div class="tree-row"><svg class="ic s28"><use href="#win"/></svg>Ficha de Conta</div>
      <div class="tree-row"><svg class="ic s28"><use href="#win"/></svg>Início</div>
      <div class="tree-row"><svg class="ic s28"><use href="#win"/></svg>Oportunidades</div>

      <div class="tree-head" style="margin-top:34px"><span>ASSETS</span><span class="head-icons"><svg class="ic s32"><use href="#folderplus"/></svg><svg class="ic s32"><use href="#upload"/></svg></span></div>
      <div class="tree-row tree-folder" style="margin-top:18px"><svg class="ic s24" style="margin-left:-3px"><use href="#down"/></svg><svg class="ic s28" style="margin-left:-5px;margin-right:-6px"><use href="#folder"/></svg><span>icons</span><span class="count">1</span></div>
      <div class="tree-kids">
        <div class="tree-row"><svg class="ic s28"><use href="#fileimg"/></svg>logo.svg</div>
      </div>

      <div class="tree-head" style="margin-top:34px"><span>WORKFLOWS</span><span class="head-icons"><svg class="ic s32"><use href="#folderplus"/></svg><svg class="ic s32"><use href="#flow"/></svg></span></div>
      <div class="tree-row" style="margin-top:18px"><svg class="ic s28"><use href="#flow"/></svg>Aprovação de oportunidade</div>
      <div class="tree-row"><svg class="ic s28"><use href="#flow"/></svg>Onboarding de conta nova</div>
    </div>
  </aside>

  <!-- main -->
  <main class="main flex-grow-1 d-flex flex-column">
    <div class="file-tabs d-flex">
      <div class="file-tab off"><svg class="ic s30"><use href="#home"/></svg>Overview</div>
      <div class="file-tab cur"><svg class="ic s30"><use href="#win"/></svg>Contas<span class="tab-x">×</span></div>
    </div>

    <div class="work">
      <div class="page-title d-flex align-items-center">
        <span class="page-name">Contas</span><span class="route-chip">/contas</span>
      </div>

      <div class="tools d-flex align-items-start" id="tools"></div>

      <div class="work-body d-flex">
        <section class="widgets">
          <div class="widgets-title">WIDGETS</div>
          <div id="widgetList"></div>
        </section>

        <section class="stage">
          <div class="frame">
            <div class="frame-label">Contas</div>
            <div class="frame-card">
              <div class="frame-card-title">contas</div>
              <table class="table frame-table">
                <thead><tr><th>Nome</th><th>Sector</th><th>Cidade</th><th>Telefone</th></tr></thead>
                <tbody id="skelRows"></tbody>
              </table>
            </div>
            <div class="frame-mark"></div>
          </div>
        </section>

        <section class="props flex-grow-1">
          <div class="props-tabs d-flex">
            <div class="props-tab on">PROPERTIES</div>
            <div class="props-tab">STRUCTURE</div>
          </div>

          <div class="sec sec-first">
            <div class="sec-head"><svg class="ic s24"><use href="#down"/></svg>SCREEN</div>
            <div class="route-label">Route</div>
            <input class="form-control route-input" value="contas">
            <div class="route-sub">/contas</div>
          </div>

          <div class="sec" style="padding-bottom:12px">
            <div class="sec-head" style="margin-bottom:24px"><svg class="ic s24"><use href="#down"/></svg>ROUTE PARAMETERS</div>
            <div class="add-link">+ add parameter</div>
          </div>

          <div class="sec">
            <div class="sec-head" style="margin-bottom:15px"><svg class="ic s24"><use href="#down"/></svg>SCREEN TEMPLATE<span class="hint-box ms-auto"><svg class="ic s24"><use href="#info"/></svg></span></div>
            <div class="prop-row"><span class="prop-label">Layout</span><select class="form-select prop-select tall"><option>— no layout —</option></select></div>
          </div>

          <div class="sec">
            <div class="sec-head" style="margin-bottom:14px"><svg class="ic s24"><use href="#down"/></svg>DATA<span class="hint-box ms-auto"><svg class="ic s24"><use href="#info"/></svg></span></div>
            <div class="note">No datastores — add a record or a list.</div>
            <div class="add-link"><span class="me-3">+ record</span>+ list</div>
          </div>

          <div class="sec">
            <div class="sec-head"><svg class="ic s24"><use href="#down"/></svg>BEHAVIOR</div>
            <div class="prop-row"><span class="prop-label">Screen scroll</span><select class="form-select prop-select"><option>Automatic</option></select></div>
          </div>

          <div class="sec" style="padding-bottom:8px">
            <div class="sec-head" style="margin-bottom:14px"><svg class="ic s24"><use href="#down"/></svg>ACCESS</div>
            <div class="prop-row"><span>Public screen (no ...</span><span class="pub-toggle ms-auto"><span></span></span></div>
          </div>

          <div class="sec">
            <div class="sec-head"><svg class="ic s24"><use href="#down"/></svg>PRESENTATION</div>
            <div class="prop-row"><span class="prop-label d-flex align-items-center gap-2">Mode <span class="hint-box"><svg class="ic s24"><use href="#info"/></svg></span></span><select class="form-select prop-select"><option>Screen</option></select></div>
          </div>

          <div class="sec" style="padding-bottom:8px">
            <div class="sec-head" style="margin-bottom:14px"><svg class="ic s24"><use href="#down"/></svg>APPEARANCE</div>
            <div class="prop-row"><span>Color</span><span class="tema-btn ms-auto"><span class="tema-swatch"></span>tema</span></div>
            <div class="prop-row" style="margin-top:9px"><span class="prop-label">Image (assets)</span><button class="btn asset-btn"><svg class="ic s32"><use href="#imagebox"/></svg></button></div>
          </div>

          <div class="sec" style="padding-bottom:8px">
            <div class="sec-head" style="margin-bottom:12px"><svg class="ic s24"><use href="#down"/></svg>EVENTS</div>
            <div class="prop-row ev-row"><span class="prop-label">onLoad</span><span class="ev-check"></span><button class="btn ev-btn">...</button></div>
            <div class="prop-row ev-row"><span class="prop-label">onParamsChange</span><span class="ev-check"></span><button class="btn ev-btn">...</button></div>
            <div class="prop-row ev-row"><span class="prop-label">onUnload</span><span class="ev-check"></span><button class="btn ev-btn">...</button></div>
          </div>
        </section>
      </div>
    </div>
  </main>
</div>

<script>
const icon = (id, size) => `<svg class="ic ${size}"><use href="#${id}"/></svg>`;

const widgets = [
  ['w-label', 'Label'], ['w-textbox', 'Textbox'], ['w-area', 'Text area'], ['w-hash', 'Number'],
  ['w-yes', 'Yes/No'], ['w-select', 'Dropdown'], ['w-date', 'Date'], ['w-color', 'Color'],
  ['upload', 'File upload'], ['w-button', 'Button'], ['w-menu', 'Menu button'], ['w-line', 'Line'],
  ['w-crumb', 'Breadcrumb'], ['w-link', 'Link'], ['w-panel', 'Panel'], ['w-tabs', 'Tabs'],
  ['w-bar', 'Fixed bar'], ['w-doc', 'Markdown'], ['globe', 'External page'], ['imagebox', 'Image'],
  ['w-table', 'Table'], ['w-list', 'List']
];
document.getElementById('widgetList').innerHTML = widgets
  .map(([id, name]) => `<div class="widget">${icon(id, 's34')}<span>${name}</span></div>`).join('') +
  '<div class="widget"></div>';

// null = separator
const tools = [
  ['monitor', 'on'], ['tablet'], ['phone'], null,
  ['undo'], ['redo'], null,
  ['front', 'dim'], ['up', 'dim'], ['down', 'dim'], ['back', 'dim'], null,
  ['copy', 'dim'], ['trash', 'dim'], null,
  ['al-left', 'dim'], ['al-cx', 'dim'], ['al-right', 'dim'], ['al-top', 'dim'],
  ['al-cy', 'dim'], ['al-bottom', 'dim'], ['dist-h', 'dim'], ['dist-v', 'dim']
];
const toolBtn = ([id, cls]) => `<button class="btn tool ${cls || ''}">${icon(id, 's34')}</button>`;
const sep = '<span class="tool-sep mt-2"></span>';
document.getElementById('tools').innerHTML =
  tools.map(t => t ? toolBtn(t) : sep).join('') +
  `<span class="ms-auto"></span>${toolBtn(['eye'])}${sep}${toolBtn(['zoomout'])}` +
  `<span class="zoom-val align-self-center">100%</span>${toolBtn(['zoomin'])}`;

document.getElementById('skelRows').innerHTML = [1, 2, 3]
  .map(() => `<tr>${'<td><span class="skel"></span></td>'.repeat(4)}</tr>`).join('');
</script>

<script src="https://cdn.jsdelivr.net/npm/bootstrap@5.3.2/dist/js/bootstrap.bundle.min.js"></script>
</body>
</html>
